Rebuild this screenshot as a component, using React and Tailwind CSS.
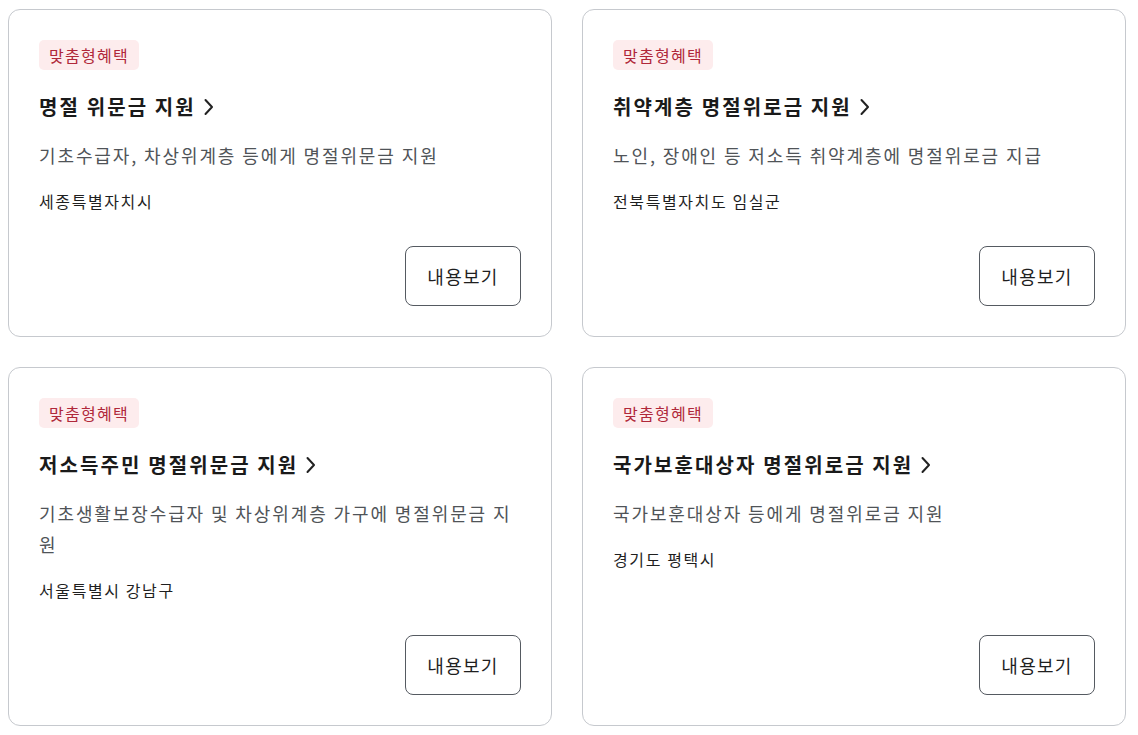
import React from "react";

const cards = [
  { title: "명절 위문금 지원", desc: "기초수급자, 차상위계층 등에게 명절위문금 지원", loc: "세종특별자치시" },
  { title: "취약계층 명절위로금 지원", desc: "노인, 장애인 등 저소득 취약계층에 명절위로금 지급", loc: "전북특별자치도 임실군" },
  { title: "저소득주민 명절위문금 지원", desc: "기초생활보장수급자 및 차상위계층 가구에 명절위문금 지원", loc: "서울특별시 강남구" },
  { title: "국가보훈대상자 명절위로금 지원", desc: "국가보훈대상자 등에게 명절위로금 지원", loc: "경기도 평택시" },
];

function Chevron() {
  return (
    <svg width="12" height="20" viewBox="0 0 12 20" fill="none" className="ml-[7px] shrink-0">
      <path d="M2.5 3 L9 10 L2.5 17" stroke="#222" strokeWidth="2" strokeLinecap="round" strokeLinejoin="round" />
    </svg>
  );
}

function Card({ title, desc, loc }) {
  return (
    <div className="flex flex-col rounded-[12px] border border-[#c6c9ce] bg-white p-[30px]">
      <div className="flex">
        <span className="flex h-[30px] items-center rounded-[5px] bg-[#fdeced] px-[10px] text-[16px] tracking-[0.08em] text-[#b0283a]">맞춤형혜택</span>
      </div>
      <div className="mt-[20px] flex h-[34px] items-center text-[20px] font-bold tracking-[0.105em] text-[#1a1a1a]">
        <span>{title}</span>
        <Chevron />
      </div>
      <p className="mt-[16px] text-[18px] leading-[31px] tracking-[0.105em] text-[#505458]">{desc}</p>
      <p className="mt-[18px] text-[16px] leading-[24px] tracking-[0.1em] text-[#1f1f1f]">{loc}</p>
      <div className="mt-auto flex justify-end pt-[33px]">
        <button className="flex h-[60px] w-[116px] items-center justify-center rounded-[8px] border border-[#555a61] bg-white text-[18px] tracking-[0.07em] text-[#1f1f1f]">
          내용보기
        </button>
      </div>
    </div>
  );
}

export default function App() {
  return (
    <div
      className="min-h-[735px] bg-white pl-[8px] pr-[12px] pt-[9px]"
      style={{ fontFamily: '"Noto Sans CJK KR", "Noto Sans", sans-serif' }}
    >
      <div className="grid grid-cols-2 gap-x-[30px] gap-y-[30px]">
        {cards.map((c, i) => (
          <Card key={i} {...c} />
        ))}
      </div>
    </div>
  );
}
